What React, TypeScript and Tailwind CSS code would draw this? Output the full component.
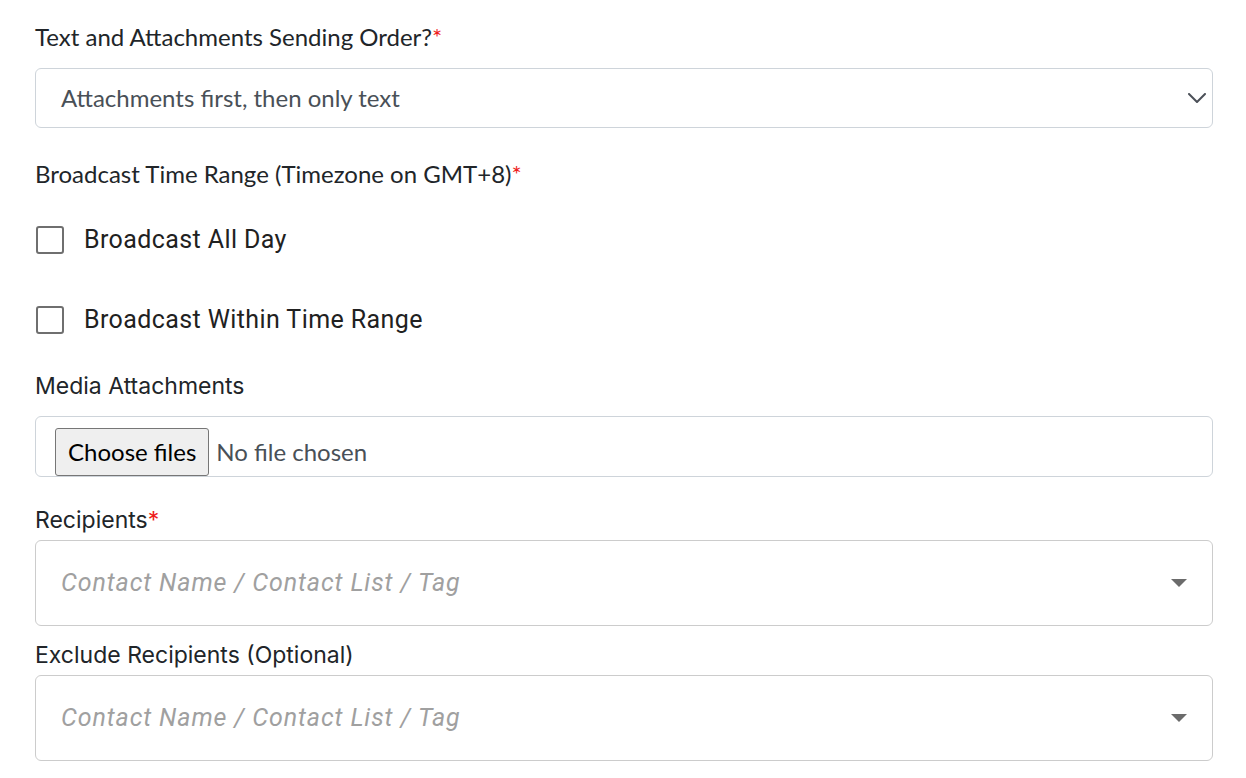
import React from "react";

const Caret = () => (
  <svg width="16" height="8" viewBox="0 0 16 8" className="shrink-0">
    <path d="M0 0 L16 0 L8 8 Z" fill="#6b6b6b" />
  </svg>
);

const Chevron = () => (
  <svg width="18" height="10" viewBox="0 0 18 10" className="shrink-0">
    <path d="M1 1 L9 9 L17 1" fill="none" stroke="#4b5058" strokeWidth="2" strokeLinecap="round" strokeLinejoin="round" />
  </svg>
);

const Req = () => <span className="text-[#ee1c1c]">*</span>;

export default function App() {
  return (
    <div className="w-[1246px] h-[778px] bg-white overflow-hidden">
      <div className="pl-[35px] pr-[33px] pt-[22px] flex flex-col">
        <div className="text-[24px] leading-[30px] text-[#212529] font-['Lato','Open_Sans',sans-serif]">
          Text and Attachments Sending Order?<Req />
        </div>
        <div className="mt-[16px] h-[60px] border border-[#ced4da] rounded-[6px] flex items-center justify-between pl-[25px] pr-[6px]">
          <span className="text-[24px] text-[#495057] font-['Lato','Open_Sans',sans-serif]">Attachments first, then only text</span>
          <Chevron />
        </div>

        <div className="mt-[31px] text-[24px] leading-[30px] text-[#212529] font-['Lato','Open_Sans',sans-serif]">
          Broadcast Time Range (Timezone on GMT+8)<Req />
        </div>

        <div className="mt-[36px] flex items-center h-[30px]">
          <div className="ml-[1px] w-[28px] h-[28px] border-[2.5px] border-[#6f6f6f] rounded-[3px]" />
          <span className="ml-[20px] text-[25px] tracking-[0.4px] text-[#212121] font-['Roboto',sans-serif]">Broadcast All Day</span>
        </div>
        <div className="mt-[50px] flex items-center h-[30px]">
          <div className="ml-[1px] w-[28px] h-[28px] border-[2.5px] border-[#6f6f6f] rounded-[3px]" />
          <span className="ml-[20px] text-[25px] tracking-[0.4px] text-[#212121] font-['Roboto',sans-serif]">Broadcast Within Time Range</span>
        </div>

        <div className="mt-[36px] text-[23px] leading-[30px] text-[#212529] font-['Inter',sans-serif]">
          Media Attachments
        </div>
        <div className="mt-[15px] h-[61px] border border-[#ced4da] rounded-[6px] flex items-center pl-[19px]">
          <div className="mt-[10px] h-[48px] px-[12px] bg-[#efefef] border border-[#767676] rounded-[3px] flex items-center text-[24px] text-black font-['Lato','Open_Sans',sans-serif]">
            Choose files
          </div>
          <span className="mt-[10px] ml-[7px] text-[24px] text-[#495057] font-['Lato','Open_Sans',sans-serif]">No file chosen</span>
        </div>

        <div className="mt-[28px] text-[23px] leading-[30px] text-[#212529] font-['Inter',sans-serif]">
          Recipients<Req />
        </div>
        <div className="mt-[5px] h-[86px] border border-[#cccccc] rounded-[6px] flex items-center justify-between pl-[25px] pr-[25px]">
          <span className="italic text-[25px] tracking-[0.9px] text-[#a0a0a0] font-['Roboto',sans-serif]">Contact Name / Contact List / Tag</span>
          <Caret />
        </div>

        <div className="mt-[14px] text-[23px] leading-[30px] text-[#212529] font-['Inter',sans-serif]">
          Exclude Recipients (Optional)
        </div>
        <div className="mt-[5px] h-[86px] border border-[#cccccc] rounded-[6px] flex items-center justify-between pl-[25px] pr-[25px]">
          <span className="italic text-[25px] tracking-[0.9px] text-[#a0a0a0] font-['Roboto',sans-serif]">Contact Name / Contact List / Tag</span>
          <Caret />
        </div>
      </div>
    </div>
  );
}
